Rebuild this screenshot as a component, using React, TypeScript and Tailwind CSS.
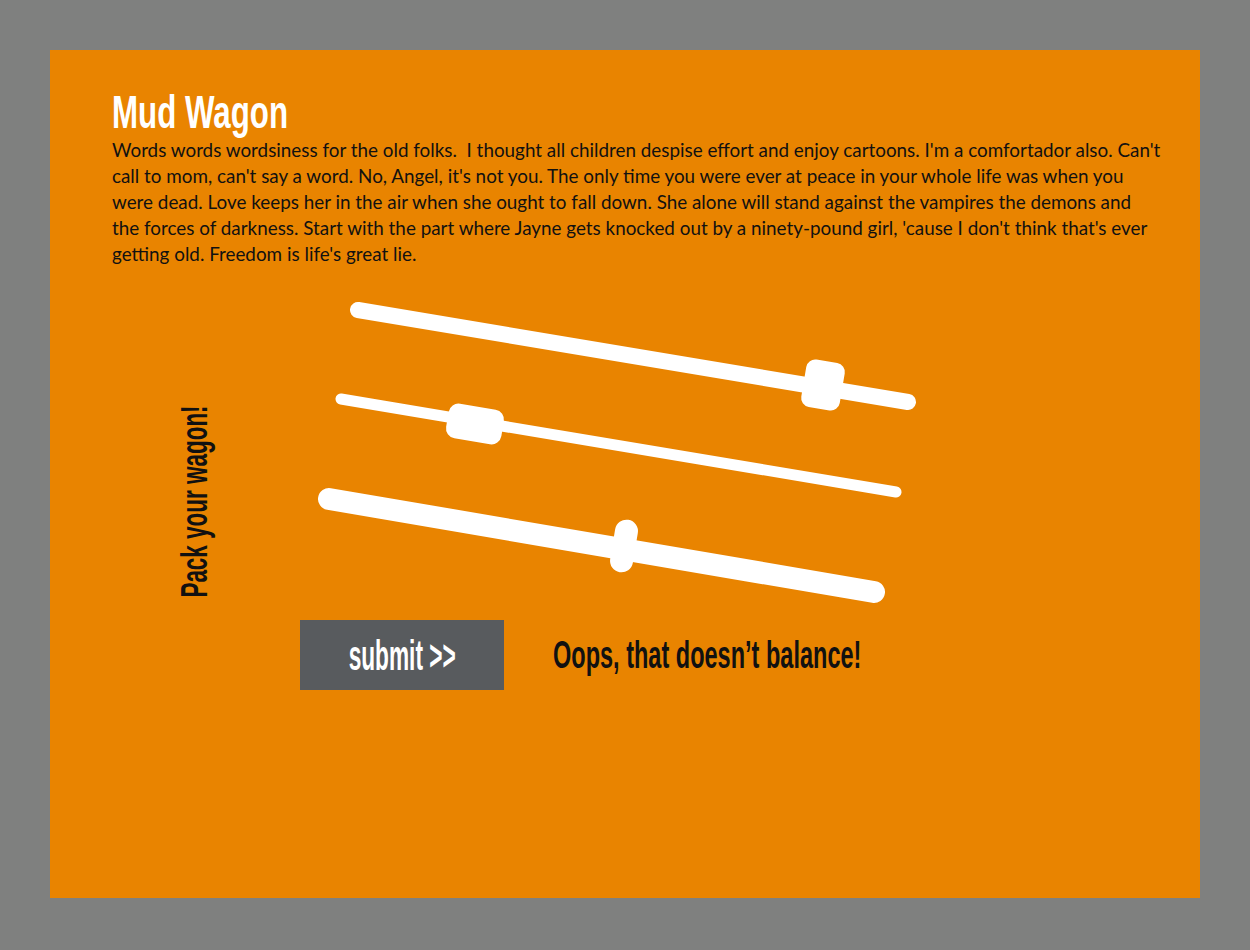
const narrow = { fontFamily: '"Liberation Sans", Arial, sans-serif' } as const;

const lines = [
  "Words words wordsiness for the old folks.  I thought all children despise effort and enjoy cartoons. I'm a comfortador also. Can't",
  "call to mom, can't say a word. No, Angel, it's not you. The only time you were ever at peace in your whole life was when you",
  "were dead. Love keeps her in the air when she ought to fall down. She alone will stand against the vampires the demons and",
  "the forces of darkness. Start with the part where Jayne gets knocked out by a ninety-pound girl, 'cause I don't think that's ever",
  "getting old. Freedom is life's great lie.",
];

type Slider = {
  x1: number;
  y1: number;
  x2: number;
  y2: number;
  w: number;
  tx: number;
  ty: number;
  tw: number;
  th: number;
  tr: number;
};

// track ends + thumb, in svg coords (svg sits at 300,290 on the page)
const sliders: Slider[] = [
  { x1: 58, y1: 20, x2: 608, y2: 112, w: 16, tx: 523, ty: 95, tw: 39, th: 48, tr: 9 },
  { x1: 41, y1: 109, x2: 596, y2: 202, w: 11, tx: 175, ty: 134, tw: 56, th: 35, tr: 10 },
  { x1: 29, y1: 209, x2: 574, y2: 302, w: 22, tx: 324, ty: 256, tw: 23, th: 53, tr: 11.5 },
];

function TiltedSliders() {
  return (
    <svg width="640" height="330" viewBox="0 0 640 330" className="block">
      {sliders.map((s, i) => (
        <g key={i}>
          <line x1={s.x1} y1={s.y1} x2={s.x2} y2={s.y2} stroke="#fff" strokeWidth={s.w} strokeLinecap="round" />
          <rect
            x={s.tx - s.tw / 2}
            y={s.ty - s.th / 2}
            width={s.tw}
            height={s.th}
            rx={s.tr}
            fill="#fff"
            transform={`rotate(9.5 ${s.tx} ${s.ty})`}
          />
        </g>
      ))}
    </svg>
  );
}

export default function App() {
  return (
    <div className="min-h-screen bg-[#7f807f] p-[50px]">
      <div className="h-[848px] bg-[#e98400] pl-[62px] pt-[39px]">
        <h1 className="h-[46px] whitespace-nowrap text-[46px] font-bold leading-[46px] text-white" style={narrow}>
          <span className="inline-block origin-left scale-x-[0.68]">Mud Wagon</span>
        </h1>
        <div
          className="mt-[2px] text-[18.85px] leading-[26px] text-[#111]"
          style={{ fontFamily: '"Lato", "Open Sans", sans-serif' }}
        >
          {lines.map((l, i) => (
            <div key={i} className="whitespace-pre">
              {l}
            </div>
          ))}
        </div>

        <div className="mt-[23px] flex items-start">
          <div className="ml-[65px] mt-[115px] flex h-[192px] w-[34px] items-center justify-center">
            <span
              className="-rotate-90 scale-x-[0.607] whitespace-nowrap text-[37px] font-bold leading-[37px] text-[#111]"
              style={narrow}
            >
              Pack your wagon!
            </span>
          </div>
          <div className="ml-[89px]">
            <TiltedSliders />
          </div>
        </div>

        <div className="ml-[188px] flex items-center gap-[49px]">
          <button
            className="flex h-[70px] w-[204px] items-center justify-center bg-[#585b5e] text-white"
            style={narrow}
          >
            <span className="scale-x-[0.54] whitespace-nowrap text-[42px] font-bold">submit &gt;&gt;</span>
          </button>
          <span
            className="inline-block origin-left scale-x-[0.603] whitespace-nowrap text-[39px] font-bold text-[#111]"
            style={narrow}
          >
            Oops, that doesn’t balance!
          </span>
        </div>
      </div>
    </div>
  );
}
